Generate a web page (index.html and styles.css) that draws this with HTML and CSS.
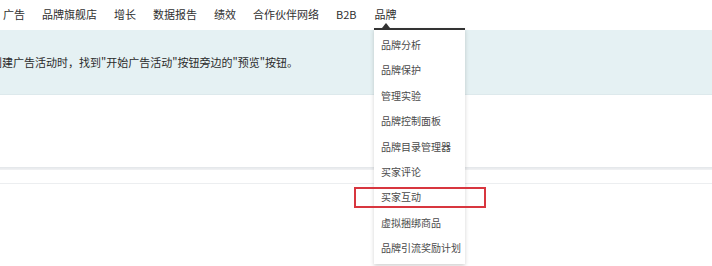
FILE: index.html
```html
<!DOCTYPE html>
<html lang="zh-CN">
<head>
<meta charset="utf-8">
<link rel="stylesheet" href="styles.css">
</head>
<body>
<div class="page">
  <nav class="nav">
    <span>广告</span>
    <span>品牌旗舰店</span>
    <span>增长</span>
    <span>数据报告</span>
    <span>绩效</span>
    <span>合作伙伴网络</span>
    <span>B2B</span>
    <span class="active">品牌</span>
  </nav>
  <div class="band">
    <p class="tip">创建广告活动时，找到"开始广告活动"按钮旁边的"预览"按钮。</p>
  </div>
  <div class="panel"></div>
  <div class="divider"></div>
  <div class="strip"></div>

  <ul class="menu">
    <li>品牌分析</li>
    <li>品牌保护</li>
    <li>管理实验</li>
    <li>品牌控制面板</li>
    <li>品牌目录管理器</li>
    <li>买家评论</li>
    <li>买家互动</li>
    <li>虚拟捆绑商品</li>
    <li>品牌引流奖励计划</li>
  </ul>
  <div class="highlight"></div>
</div>
</body>
</html>
```

FILE: styles.css
```css
html, body {
  margin: 0;
  padding: 0;
  background: #ffffff;
}
body {
  width: 712px;
  height: 266px;
  overflow: hidden;
  font-family: "Noto Sans CJK SC", "Noto Sans", sans-serif;
  color: #333333;
}
.page {
  position: relative;
  width: 712px;
  height: 266px;
}
.nav {
  height: 30px;
  display: flex;
  align-items: center;
  gap: 17px;
  padding-left: 3px;
  font-size: 11px;
  color: #2f2f2f;
  box-sizing: border-box;
  padding-bottom: 2px;
}
.nav .active {
  margin-left: 1px;
}
.band {
  height: 65px;
  background: #e5f1f3;
  display: flex;
  align-items: center;
  border-bottom: 1px solid #dde9ec;
  box-sizing: border-box;
}
.tip {
  margin: 0;
  font-size: 11px;
  color: #2b2b2b;
  text-indent: -9px;
}
.panel {
  height: 72px;
  background: #ffffff;
}
.divider {
  height: 3px;
  background: linear-gradient(#e3e6e9, #f1f2f4);
}
.strip {
  height: 13px;
  border-bottom: 1px solid #eceef0;
}
.menu {
  position: absolute;
  left: 374px;
  top: 28px;
  width: 91px;
  margin: 0;
  padding: 2px 0 3px 0;
  list-style: none;
  background: #ffffff;
  border-top: 2px solid #333333;
  box-shadow: 0 2px 4px rgba(0, 0, 0, 0.18);
  font-size: 10px;
  color: #4a4a4a;
}
.menu::before {
  content: "";
  position: absolute;
  left: 8px;
  top: -7px;
  border-left: 4px solid transparent;
  border-right: 4px solid transparent;
  border-bottom: 5px solid #333333;
}
.menu li {
  height: 25.4px;
  line-height: 25.4px;
  padding-left: 7px;
  white-space: nowrap;
}
.highlight {
  position: absolute;
  left: 354px;
  top: 187px;
  width: 132px;
  height: 21px;
  box-sizing: border-box;
  border: 2px solid #d8363f;
}
```
